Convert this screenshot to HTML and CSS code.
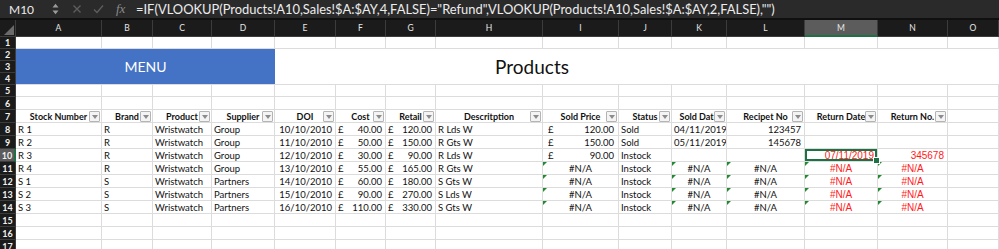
FILE: index.html
```html
<!DOCTYPE html>
<html>
<head>
<meta charset="utf-8">
<link rel="stylesheet" href="styles.css">
</head>
<body>
<div class="fbar">
  <span class="namebox">M10</span>
  <span class="spin"><svg width="7" height="12" viewBox="0 0 7 12"><path d="M0.5 4.5 L3.5 0.8 L6.5 4.5 Z M0.5 7.5 L3.5 11.2 L6.5 7.5 Z" fill="#9a9a9a"/></svg></span>
  <span class="ficon"><svg width="10" height="10" viewBox="0 0 10 10"><path d="M1.5 1.5 L8.5 8.5 M8.5 1.5 L1.5 8.5" stroke="#5e5e5e" stroke-width="1.3" fill="none"/></svg></span>
  <span class="ficon"><svg width="11" height="10" viewBox="0 0 11 10"><path d="M1 5.5 L4 8.5 L10 1.5" stroke="#5e5e5e" stroke-width="1.3" fill="none"/></svg></span>
  <span class="fx">fx</span>
  <span class="formula">=IF(VLOOKUP(Products!A10,Sales!$A:$AY,4,FALSE)="Refund",VLOOKUP(Products!A10,Sales!$A:$AY,2,FALSE),"")</span>
</div>
<div class="sheet">
  <div class="corner"></div>
  <div class="ch">A</div><div class="ch">B</div><div class="ch">C</div><div class="ch">D</div><div class="ch">E</div><div class="ch">F</div><div class="ch">G</div><div class="ch">H</div><div class="ch">I</div><div class="ch">J</div><div class="ch">K</div><div class="ch">L</div><div class="ch sel">M</div><div class="ch">N</div><div class="ch">O</div>

  <div class="rh">1</div>
  <div class="c"></div><div class="c"></div><div class="c"></div><div class="c"></div><div class="c"></div><div class="c"></div><div class="c"></div><div class="c"></div><div class="c"></div><div class="c"></div><div class="c"></div><div class="c"></div><div class="c"></div><div class="c"></div><div class="c"></div>

  <div class="rh">2</div>
  <div class="menu">MENU</div>
  <div class="title">Products</div>
  <div class="rh">3</div>
  <div class="rh">4</div>

  <div class="rh">5</div>
  <div class="c"></div><div class="c"></div><div class="c"></div><div class="c"></div><div class="c"></div><div class="c"></div><div class="c"></div><div class="c"></div><div class="c"></div><div class="c"></div><div class="c"></div><div class="c"></div><div class="c"></div><div class="c"></div><div class="c"></div>

  <div class="rh">6</div>
  <div class="c"></div><div class="c"></div><div class="c"></div><div class="c"></div><div class="c"></div><div class="c"></div><div class="c"></div><div class="c"></div><div class="c"></div><div class="c"></div><div class="c"></div><div class="c"></div><div class="c"></div><div class="c"></div><div class="c"></div>

  <div class="rh">7</div>
  <div class="c h">Stock Number<i class="fb"></i></div>
  <div class="c h">Brand<i class="fb"></i></div>
  <div class="c h">Product<i class="fb"></i></div>
  <div class="c h">Supplier<i class="fb"></i></div>
  <div class="c h">DOI<i class="fb"></i></div>
  <div class="c h">Cost<i class="fb"></i></div>
  <div class="c h">Retail<i class="fb"></i></div>
  <div class="c h">Descritption<i class="fb"></i></div>
  <div class="c h">Sold Price<i class="fb"></i></div>
  <div class="c h">Status<i class="fb"></i></div>
  <div class="c h">Sold Date<i class="fb"></i></div>
  <div class="c h">Recipet No<i class="fb"></i></div>
  <div class="c h">Return Date<i class="fb"></i></div>
  <div class="c h">Return No.<i class="fb"></i></div>
  <div class="c"></div>

  <div class="rh">8</div>
  <div class="c">R 1</div><div class="c">R</div><div class="c">Wristwatch</div><div class="c">Group</div><div class="c r">10/10/2010</div>
  <div class="c cur"><span>£</span><span>40.00</span></div><div class="c cur"><span>£</span><span>120.00</span></div>
  <div class="c">R Lds W</div><div class="c cur wide"><span>£</span><span>120.00</span></div><div class="c">Sold</div>
  <div class="c">04/11/2019</div><div class="c r">123457</div><div class="c"></div><div class="c"></div><div class="c"></div>

  <div class="rh">9</div>
  <div class="c">R 2</div><div class="c">R</div><div class="c">Wristwatch</div><div class="c">Group</div><div class="c r">11/10/2010</div>
  <div class="c cur"><span>£</span><span>50.00</span></div><div class="c cur"><span>£</span><span>150.00</span></div>
  <div class="c">R Gts W</div><div class="c cur wide"><span>£</span><span>150.00</span></div><div class="c">Sold</div>
  <div class="c">05/11/2019</div><div class="c r">145678</div><div class="c"></div><div class="c"></div><div class="c"></div>

  <div class="rh rsel">10</div>
  <div class="c">R 3</div><div class="c">R</div><div class="c">Wristwatch</div><div class="c">Group</div><div class="c r">12/10/2010</div>
  <div class="c cur"><span>£</span><span>30.00</span></div><div class="c cur"><span>£</span><span>90.00</span></div>
  <div class="c">R Lds W</div><div class="c cur wide"><span>£</span><span>90.00</span></div><div class="c">Instock</div>
  <div class="c"></div><div class="c"></div><div class="c r red active">07/11/2019</div><div class="c r red">345678</div><div class="c"></div>

  <div class="rh">11</div>
  <div class="c">R 4</div><div class="c">R</div><div class="c">Wristwatch</div><div class="c">Group</div><div class="c r">13/10/2010</div>
  <div class="c cur"><span>£</span><span>55.00</span></div><div class="c cur"><span>£</span><span>165.00</span></div>
  <div class="c">R Gts W</div><div class="c ctr err">#N/A</div><div class="c">Instock</div>
  <div class="c ctr err">#N/A</div><div class="c ctr err">#N/A</div><div class="c ctr err red">#N/A</div><div class="c ctr err red">#N/A</div><div class="c"></div>

  <div class="rh">12</div>
  <div class="c">S 1</div><div class="c">S</div><div class="c">Wristwatch</div><div class="c">Partners</div><div class="c r">14/10/2010</div>
  <div class="c cur"><span>£</span><span>60.00</span></div><div class="c cur"><span>£</span><span>180.00</span></div>
  <div class="c">S Gts W</div><div class="c ctr err">#N/A</div><div class="c">Instock</div>
  <div class="c ctr err">#N/A</div><div class="c ctr err">#N/A</div><div class="c ctr err red">#N/A</div><div class="c ctr err red">#N/A</div><div class="c"></div>

  <div class="rh">13</div>
  <div class="c">S 2</div><div class="c">S</div><div class="c">Wristwatch</div><div class="c">Partners</div><div class="c r">15/10/2010</div>
  <div class="c cur"><span>£</span><span>90.00</span></div><div class="c cur"><span>£</span><span>270.00</span></div>
  <div class="c">S Lds W</div><div class="c ctr err">#N/A</div><div class="c">Instock</div>
  <div class="c ctr err">#N/A</div><div class="c ctr err">#N/A</div><div class="c ctr err red">#N/A</div><div class="c ctr err red">#N/A</div><div class="c"></div>

  <div class="rh">14</div>
  <div class="c">S 3</div><div class="c">S</div><div class="c">Wristwatch</div><div class="c">Partners</div><div class="c r">16/10/2010</div>
  <div class="c cur"><span>£</span><span>110.00</span></div><div class="c cur"><span>£</span><span>330.00</span></div>
  <div class="c">S Gts W</div><div class="c ctr err">#N/A</div><div class="c">Instock</div>
  <div class="c ctr err">#N/A</div><div class="c ctr err">#N/A</div><div class="c ctr err red">#N/A</div><div class="c ctr err red">#N/A</div><div class="c"></div>

  <div class="rh">15</div>
  <div class="c"></div><div class="c"></div><div class="c"></div><div class="c"></div><div class="c"></div><div class="c"></div><div class="c"></div><div class="c"></div><div class="c"></div><div class="c"></div><div class="c"></div><div class="c"></div><div class="c"></div><div class="c"></div><div class="c"></div>

  <div class="rh">16</div>
  <div class="c"></div><div class="c"></div><div class="c"></div><div class="c"></div><div class="c"></div><div class="c"></div><div class="c"></div><div class="c"></div><div class="c"></div><div class="c"></div><div class="c"></div><div class="c"></div><div class="c"></div><div class="c"></div><div class="c"></div>

  <div class="rh">17</div>
  <div class="c"></div><div class="c"></div><div class="c"></div><div class="c"></div><div class="c"></div><div class="c"></div><div class="c"></div><div class="c"></div><div class="c"></div><div class="c"></div><div class="c"></div><div class="c"></div><div class="c"></div><div class="c"></div><div class="c"></div>
</div>
</body>
</html>
```

FILE: styles.css
```css
* { box-sizing: border-box; }
html, body { margin: 0; padding: 0; background: #ffffff; overflow: hidden; }
body { width: 999px; height: 249px; font-family: Lato, "Liberation Sans", sans-serif; }

.fbar {
  height: 20px;
  background: #2a2a2a;
  border-bottom: 2px solid #101010;
  display: flex;
  align-items: center;
  color: #ececec;
  font-size: 12px;
}
.namebox { width: 52px; padding-left: 9px; }
.spin { width: 20px; display: flex; align-items: center; }
.ficon { width: 21px; display: flex; align-items: center; }
.fx { width: 22px; padding-left: 2px; font-family: "Liberation Serif", serif; font-style: italic; font-size: 13px; color: #8a8a8a; }
.formula { padding-left: 0; white-space: nowrap; font-size: 12.9px; }

.sheet {
  display: grid;
  grid-template-columns: 16px 86px 51px 59px 63px 61px 50px 50px 107px 76px 53px 55px 78px 73px 70px 51px;
  grid-template-rows: 17px 12px 12px 12px 12px 12px 13px 13px repeat(10, 13px);
  font-size: 9.5px;
  color: #111;
}

.corner {
  background: #1b1b1b;
  border-right: 1px solid #3c3c3c;
  border-bottom: 1px solid #3c3c3c;
  position: relative;
}
.corner::after {
  content: "";
  position: absolute;
  right: 1px; bottom: 1px;
  border-style: solid;
  border-width: 0 0 10px 10px;
  border-color: transparent transparent #6a6a6a transparent;
}
.ch {
  background: #1b1b1b;
  color: #e6e6e6;
  border-right: 1px solid #3c3c3c;
  border-bottom: 1px solid #3c3c3c;
  text-align: center;
  font-size: 8.5px;
  line-height: 16px;
}
.ch.sel { background: #5c5c5c; border-bottom: 2px solid #1e7145; }

.rh {
  background: #1b1b1b;
  color: #f2f2f2;
  border-right: 1px solid #3c3c3c;
  border-bottom: 1px solid #3c3c3c;
  font-size: 9px;
  font-weight: bold;
  text-align: center;
  display: flex;
  align-items: center;
  justify-content: center;
}
.rh.rsel { background: #5c5c5c; border-right: 2px solid #1e7145; }

.c {
  border-right: 1px solid #dcdcdc;
  border-bottom: 1px solid #dcdcdc;
  padding: 0 2px;
  white-space: nowrap;
  overflow: hidden;
  display: flex;
  align-items: center;
  position: relative;
}
.c.r { justify-content: flex-end; padding-right: 3px; }
.c.ctr { justify-content: center; }
.c.cur { justify-content: space-between; padding-right: 3px; }
.c.cur.wide { padding-left: 5px; padding-right: 4px; }
.c.red { color: #ff1a1a; font-family: "Liberation Sans", Arial, sans-serif; font-size: 10px; }

.c.h { font-weight: bold; justify-content: center; font-size: 9px; }
.fb {
  position: absolute;
  right: 1px;
  top: 1px;
  width: 11px;
  height: 11px;
  background: #f4f4f4;
  border: 1px solid #b4b4b4;
  border-radius: 1px;
}
.fb::after {
  content: "";
  position: absolute;
  left: 2px; top: 3px;
  border-style: solid;
  border-width: 4px 3px 0 3px;
  border-color: #8c8c8c transparent transparent transparent;
}

.c.err::before {
  content: "";
  position: absolute;
  left: 0; top: 0;
  border-style: solid;
  border-width: 4px 4px 0 0;
  border-color: #1f8a2f transparent transparent transparent;
}

.c.active {
  overflow: visible;
  box-shadow: inset 0 0 0 2px #1e7145;
}
.c.active::after {
  content: "";
  position: absolute;
  right: -3px; bottom: -3px;
  width: 5px; height: 5px;
  background: #1e7145;
  border: 1px solid #ffffff;
  z-index: 2;
}

.menu {
  grid-column: 2 / 6;
  grid-row: span 3;
  background: #4472c4;
  color: #ffffff;
  font-size: 14px;
  display: flex;
  align-items: center;
  justify-content: center;
  border-bottom: 1px solid #dcdcdc;
}
.title {
  grid-column: 6 / 17;
  grid-row: span 3;
  display: flex;
  align-items: center;
  justify-content: center;
  padding-right: 210px;
  font-size: 19px;
  color: #111;
  border-bottom: 1px solid #dcdcdc;
}
```
